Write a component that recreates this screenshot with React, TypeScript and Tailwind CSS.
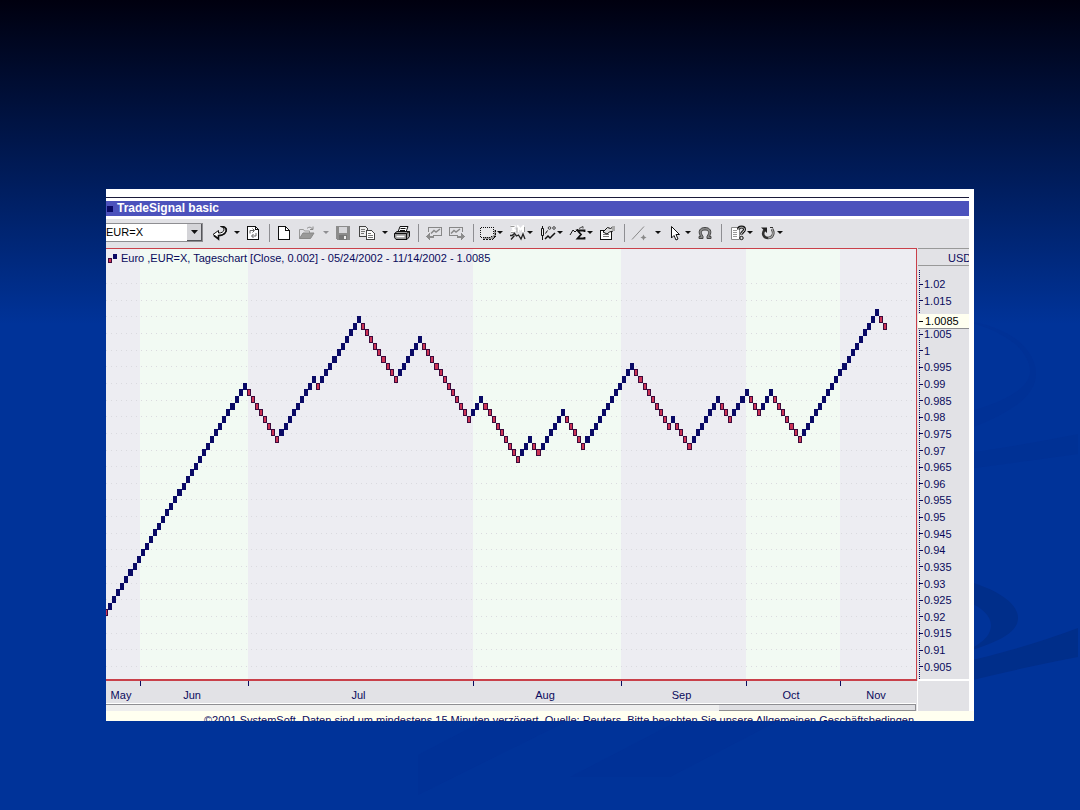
import React from 'react';

const CHART_WIDTH = 810;
const CHART_HEIGHT = 430;

// Signed run lengths of the renko bricks, oldest first
const RUNS = [34, -8, 9, -1, 10, -9, 6, -12, 3, -9, 3, -2, 6, -5, 12, -9, 1, -4, 7, -3, 4, -3, 3, -7, 19, -2];

const MONTHS = [
  { name: 'May', start: 0, end: 34, green: false },
  { name: 'Jun', start: 34, end: 142, green: true },
  { name: 'Jul', start: 142, end: 367, green: false },
  { name: 'Aug', start: 367, end: 515, green: true },
  { name: 'Sep', start: 515, end: 640, green: false },
  { name: 'Oct', start: 640, end: 734, green: true },
  { name: 'Nov', start: 734, end: 810, green: false },
];

const PRICES = [
  '1.02', '1.015', '1.01', '1.005', '1', '0.995', '0.99', '0.985', '0.98', '0.975', '0.97', '0.965',
  '0.96', '0.955', '0.95', '0.945', '0.94', '0.935', '0.93', '0.925', '0.92', '0.915', '0.91', '0.905',
];

type Brick = { x: number; y: number; width: number; up: boolean };

const brickX = (index: number) => Math.round(index * 4.08 - 2);

const buildBricks = (): Brick[] => {
  let index = 0;
  let level = 0;
  const bricks: Brick[] = [{ x: -2, y: 360, width: 4, up: false }];
  RUNS.forEach(run => {
    for (let i = 0; i < Math.abs(run); i++) {
      index += 1;
      level += Math.sign(run);
      bricks.push({
        x: brickX(index),
        y: Math.round(360.4 - level * 6.67),
        width: brickX(index + 1) - brickX(index),
        up: run > 0,
      });
    }
  });
  return bricks;
};

const BRICKS = buildBricks();

const Icon: React.FC<{ children: React.ReactNode; smooth?: boolean }> = ({ children, smooth }) => (
  <svg
    width="18"
    height="16"
    viewBox="0 0 18 16"
    fill="none"
    stroke="#111"
    shapeRendering={smooth ? 'auto' : 'crispEdges'}
    className="shrink-0"
    aria-hidden="true"
  >
    {children}
  </svg>
);

const BackIcon = () => (
  <Icon smooth>
    <path d="M9.500 1.500h2.500c3 0 4.500 2.500 3 5.500-1.500 2.500-4 3.500-7.500 3.500V14L2 9.500l5.500-4v2.500c3 0 5-1 5.500-3 .3-1.500-1-3-3.500-3.500z" fill="#fff" />
    <path d="M12 2c3.500.5 4 3.500 2 6s-4 2.500-6.500 2.500V14L3 10.500" strokeWidth="1.600" />
  </Icon>
);

const RefreshIcon = () => (
  <Icon>
    <path d="M3.500 1.500h8l3 3v10h-11z" fill="#fff" />
    <path d="M11.500 1.500v3h3" />
    <path d="M6 8.500V5.500h4M8.500 3.500l2 2-2 2M12 8v3H8M9.500 9l-2 2 2 2" stroke="#666" shapeRendering="auto" />
  </Icon>
);

const NewIcon = () => (
  <Icon>
    <path d="M3.500 1.500h7l4 4v9h-11z" fill="#fff" />
    <path d="M10.500 1.500v4h4" />
  </Icon>
);

const OpenIcon = () => (
  <Icon smooth>
    <path d="M1.500 13.500v-9h4l1 1.500h5v2" stroke="#999" />
    <path d="M1.500 13.500l3.500-5.500h11l-3.500 5.500z" fill="#999" stroke="#888" />
    <path d="M9 3.500c2-2 4-1.500 5.500.5M15 1.500v3h-3" stroke="#888" />
  </Icon>
);

const SaveIcon = () => (
  <Icon>
    <path d="M2 1h14v14H3l-1-1z" fill="#8c8c8c" stroke="none" />
    <path d="M5 2h8v6H5z" fill="#d6d6da" stroke="none" />
    <path d="M5 10h8v5H5z" fill="#777" stroke="none" />
    <path d="M10 11h2v3h-2z" fill="#eee" stroke="none" />
  </Icon>
);

const CopyIcon = () => (
  <Icon>
    <path d="M1.500 1.500h6l2 2v8h-8z" fill="#eee" stroke="#444" />
    <path d="M3 4.500h4M3 6.500h4M3 8.500h3" stroke="#777" />
    <path d="M8.500 5.500h5l3 3v6h-8z" fill="#fff" stroke="#444" />
    <path d="M10 8.500h3M10 10.500h5M10 12.500h5" stroke="#777" />
  </Icon>
);

const PrintIcon = () => (
  <Icon smooth>
    <path d="M5 7l2-5.500h8L13 7z" fill="#fff" />
    <path d="M7.500 3.500h5M7 5.500h5" />
    <path d="M1.500 8.500L4 6.500h12.500v5L14 14.500H3l-1.500-2z" fill="#999" />
    <path d="M1.500 8.500h12v5.500M13.500 8.500l3-2" />
    <path d="M3.500 11.500h8" stroke="#fff" strokeWidth="1.500" />
  </Icon>
);

const ChartBackIcon = () => (
  <Icon>
    <path d="M3.500 7V2.500h13v8H8" stroke="#888" />
    <path d="M6 8.500l3-3 2 1.500 4-3" stroke="#888" strokeWidth="1.500" shapeRendering="auto" />
    <path d="M1 11.500l4-4v3h4v2H5v3z" fill="#8c8c8c" stroke="none" />
  </Icon>
);

const ChartForwardIcon = () => (
  <Icon>
    <path d="M10 10.500H1.500v-8h13V7" stroke="#888" />
    <path d="M3 8.500l3-3 2 1.500 4-3" stroke="#888" strokeWidth="1.500" shapeRendering="auto" />
    <path d="M17 11.500l-4-4v3H9v2h4v3z" fill="#8c8c8c" stroke="none" />
  </Icon>
);

const FrameIcon = () => (
  <Icon>
    <path d="M14 5h3v7l-3 2H4v-3h10z" fill="#999" stroke="none" />
    <path d="M1.500 2.500h13v7l-3 2.500h-10z" fill="#e8e8ea" strokeDasharray="1 1" />
    <path d="M16.500 5v6l-3 3.500H4" strokeDasharray="2 1" />
  </Icon>
);

const PeriodIcon = () => (
  <Icon smooth>
    <path d="M2 1.500h3.500L4 4l2 1.500L2 7M9 7V1.500l2.500 3 2.500-3V7" stroke="#fff" strokeWidth="2" />
    <path d="M1.500 1.500h4M2 7.500h4M8 2.500v5M15.500 2v5" stroke="#999" />
    <path d="M1 10.500h2l2.500-2 2 2.500 2-1 2.500 4 2-5 2 5M2 14.500l3.500-4" stroke="#222" strokeWidth="1.300" />
  </Icon>
);

const CandleIcon = () => (
  <Icon smooth>
    <path d="M3.500 1v2M3.500 11v4" />
    <path d="M2.500 3.500h2v7h-2z" fill="#eee" />
    <path d="M6 14l3-3 2 2 5-5" strokeWidth="1.500" />
    <path d="M6.500 8.500l2-3" />
    <circle cx="10.500" cy="3" r="1.300" stroke="#444" />
    <circle cx="15" cy="3" r="1.300" stroke="#444" />
  </Icon>
);

const SigmaIcon = () => (
  <Icon smooth>
    <path d="M1 10l3-5 2 2 3-3" />
    <path d="M15.500 7V5.500H8.500l3.500 4-3.500 4h7V12" strokeWidth="1.800" />
    <path d="M10 3.500l4-2v2" stroke="#444" />
  </Icon>
);

const PropertiesIcon = () => (
  <Icon>
    <path d="M2.500 5.500h11v9h-11z" fill="#fff" />
    <path d="M5 9.500h6M5 11.500h6" stroke="#777" />
    <path d="M5 7l4.500-4.500 3 1L15 2v4l-3.500 1L9 9z" fill="#ddd" shapeRendering="auto" />
    <path d="M14 1h3v5h-3z" fill="#aaa" stroke="none" />
  </Icon>
);

const LineIcon = () => (
  <Icon smooth>
    <path d="M2 14.500L14 1.500" stroke="#888" />
    <path d="M13.500 9.500l1 2 2 1-2 1-1 2-1-2-2-1 2-1z" fill="#888" stroke="none" />
  </Icon>
);

const CursorIcon = () => (
  <Icon smooth>
    <path d="M5.500 1.500v11.500l2.500-2.500 2 4.500 2-1-2-4.500h3.500z" fill="#fff" />
  </Icon>
);

const MagnetIcon = () => (
  <Icon smooth>
    <path
      d="M3 13.500h4v-2C4 7 5.500 5 9 5s5 2 2 6.500v2h4v-2h-1.500C16.500 6 14 2.500 9 2.500S1.500 6 4.500 11.500H3z"
      fill="#8a8a8a"
      stroke="#444"
    />
  </Icon>
);

const HelpIcon = () => (
  <Icon smooth>
    <path d="M2.500 2.500h8v12h-8z" fill="#fff" stroke="#888" />
    <path d="M4 5.500h4M4 7.500h4M4 9.500h4M4 11.500h4" stroke="#999" />
    <path d="M9.500 4.500C9.500 1 15.500 1 15.500 4.500c0 2.500-3 2-3 5" stroke="#111" strokeWidth="3" />
    <path d="M9.500 4.500C9.500 1.500 15.500 1.500 15.500 4.500c0 2.500-3 2-3 4.500" stroke="#ddd" />
    <circle cx="12.500" cy="13" r="1.700" fill="#ddd" />
  </Icon>
);

const UndoIcon = () => (
  <Icon smooth>
    <path d="M13 4c3 5 0 9-4 9s-6.500-4-3.500-8" stroke="#333" strokeWidth="2.600" />
    <path d="M13 4c3 5 0 9-4 9" stroke="#aaa" strokeWidth="1.200" />
    <path d="M2 2.500h6V8z" fill="#222" stroke="none" />
    <path d="M11 2.500h3" stroke="#333" />
  </Icon>
);

type Tool =
  | { kind: 'icon'; label: string; width: string; icon: React.FC; end?: boolean }
  | { kind: 'menu'; label: string; width: string; muted?: boolean }
  | { kind: 'line'; width: string };

const TOOLS: Tool[] = [
  { kind: 'icon', label: 'Back', width: 'w-[22px]', icon: BackIcon },
  { kind: 'menu', label: 'Back history', width: 'w-[12px]' },
  { kind: 'icon', label: 'Refresh', width: 'w-[20px]', icon: RefreshIcon },
  { kind: 'line', width: 'w-[12px]' },
  { kind: 'icon', label: 'New', width: 'w-[18px]', icon: NewIcon },
  { kind: 'icon', label: 'Open', width: 'w-[28px]', icon: OpenIcon },
  { kind: 'menu', label: 'Open recent', width: 'w-[10px]', muted: true },
  { kind: 'icon', label: 'Save', width: 'w-[24px]', icon: SaveIcon },
  { kind: 'icon', label: 'Copy', width: 'w-[24px]', icon: CopyIcon },
  { kind: 'menu', label: 'Copy options', width: 'w-[12px]' },
  { kind: 'icon', label: 'Print', width: 'w-[22px]', icon: PrintIcon },
  { kind: 'line', width: 'w-[10px]' },
  { kind: 'icon', label: 'Previous chart', width: 'w-[22px]', icon: ChartBackIcon },
  { kind: 'icon', label: 'Next chart', width: 'w-[24px]', icon: ChartForwardIcon },
  { kind: 'line', width: 'w-[8px]' },
  { kind: 'icon', label: 'Frame', width: 'w-[20px]', icon: FrameIcon, end: true },
  { kind: 'menu', label: 'Frame options', width: 'w-[6px]' },
  { kind: 'icon', label: 'Period', width: 'w-[24px]', icon: PeriodIcon, end: true },
  { kind: 'menu', label: 'Period options', width: 'w-[6px]' },
  { kind: 'icon', label: 'Chart type', width: 'w-[24px]', icon: CandleIcon, end: true },
  { kind: 'menu', label: 'Chart type options', width: 'w-[6px]' },
  { kind: 'icon', label: 'Indicators', width: 'w-[24px]', icon: SigmaIcon, end: true },
  { kind: 'menu', label: 'Indicator options', width: 'w-[6px]' },
  { kind: 'icon', label: 'Properties', width: 'w-[28px]', icon: PropertiesIcon },
  { kind: 'line', width: 'w-[6px]' },
  { kind: 'icon', label: 'Draw line', width: 'w-[24px]', icon: LineIcon },
  { kind: 'menu', label: 'Drawing tools', width: 'w-[14px]' },
  { kind: 'icon', label: 'Pointer', width: 'w-[20px]', icon: CursorIcon },
  { kind: 'menu', label: 'Pointer options', width: 'w-[6px]' },
  { kind: 'icon', label: 'Magnet', width: 'w-[28px]', icon: MagnetIcon },
  { kind: 'line', width: 'w-[4px]' },
  { kind: 'icon', label: 'Help', width: 'w-[24px]', icon: HelpIcon, end: true },
  { kind: 'menu', label: 'Help topics', width: 'w-[6px]' },
  { kind: 'icon', label: 'Undo', width: 'w-[24px]', icon: UndoIcon, end: true },
  { kind: 'menu', label: 'Undo history', width: 'w-[6px]' },
];

const ToolItem: React.FC<{ tool: Tool }> = ({ tool }) => {
  if (tool.kind === 'line') {
    return (
      <div className={`${tool.width} flex shrink-0 justify-center`}>
        <span className="h-[18px] w-px bg-[#8e8e92]" />
      </div>
    );
  }
  if (tool.kind === 'menu') {
    return (
      <button type="button" aria-label={tool.label} className={`${tool.width} flex shrink-0 justify-center`}>
        <svg width="6" height="3" viewBox="0 0 6 3" className="shrink-0" aria-hidden="true">
          <path d="M0 0h6L3 3z" fill={tool.muted ? '#8e8e92' : '#111'} />
        </svg>
      </button>
    );
  }
  const ToolIcon = tool.icon;
  return (
    <button
      type="button"
      aria-label={tool.label}
      className={`${tool.width} flex shrink-0 ${tool.end ? 'justify-end' : 'justify-center'}`}
    >
      <ToolIcon />
    </button>
  );
};

const Toolbar = () => (
  <div className="flex h-[29px] items-center overflow-hidden bg-[#e2e2e6] pb-0.5">
    <div className="relative mr-1.5 h-[19px] w-[97px] shrink-0 border-y border-r border-[#8e8e92] bg-white">
      <select aria-label="Symbol" className="block h-4 w-full appearance-none bg-transparent text-[11px] leading-4 text-black">
        <option>EUR=X</option>
      </select>
      <span className="pointer-events-none absolute inset-y-0 right-0 flex w-[15px] items-center justify-center border-r border-b border-[#55555a] bg-[#d4d4d8]">
        <svg width="7" height="4" viewBox="0 0 7 4" aria-hidden="true">
          <path d="M0 0h7L3.500 4z" fill="#111" />
        </svg>
      </span>
    </div>
    {TOOLS.map((tool, i) => (
      <ToolItem key={i} tool={tool} />
    ))}
  </div>
);

const RenkoChart = () => (
  <svg
    viewBox={`0 0 ${CHART_WIDTH} ${CHART_HEIGHT}`}
    preserveAspectRatio="none"
    shapeRendering="crispEdges"
    className="block h-[430px] w-full"
    role="img"
    aria-label="Euro renko chart"
  >
    {MONTHS.map(month => (
      <rect
        key={month.name}
        x={month.start}
        width={month.end - month.start}
        height={CHART_HEIGHT}
        fill={month.green ? '#f2faf3' : '#ededf2'}
      />
    ))}
    {PRICES.map((price, i) => {
      const y = Math.round(34 + i * 16.65) + 0.5;
      return <line key={price} x1="0" x2={CHART_WIDTH} y1={y} y2={y} stroke="#dadadf" strokeDasharray="1 4" />;
    })}
    {BRICKS.map((brick, i) =>
      brick.up ? (
        <rect key={i} x={brick.x} y={brick.y} width={brick.width} height="7" fill="#0a0a66" />
      ) : (
        <g key={i}>
          <rect x={brick.x} y={brick.y} width={brick.width} height="7" fill="#3d0a3c" />
          <rect x={brick.x + 1} y={brick.y + 1} width={brick.width - 2} height="5" fill="#cc3355" />
        </g>
      )
    )}
  </svg>
);

const PriceAxis = () => (
  <div className="flex w-[52px] shrink-0 flex-col bg-[#e2e2e6] pl-px">
    <div className="h-[18px] overflow-hidden border-y border-[#999] pl-[30px] leading-[18px]">USD</div>
    <div className="relative flex flex-1 flex-col border-b-2 border-white pt-[10px] pb-1">
      <div className="absolute top-1 bottom-0 left-px border-l border-dotted border-[#0a0a5c]" />
      {PRICES.map(price => (
        <div key={price} className="flex flex-1 items-center">
          <span className="mr-px ml-px h-px w-1 bg-[#0a0a5c]" />
          <span className="leading-3">{price}</span>
        </div>
      ))}
      <div className="absolute top-[48px] right-0 left-0 flex h-[15px] items-center border-b border-[#8e8e92] bg-[#fffff0] text-black">
        <span className="mr-0.5 ml-px h-px w-1 bg-black" />
        1.0085
      </div>
    </div>
  </div>
);

const TimeAxis = () => (
  <div className="flex bg-[#e2e2e6]">
    <div className="min-w-0 flex-1 pr-px">
      <div className="grid h-[23px] grid-cols-[34fr_108fr_225fr_148fr_125fr_94fr_76fr] border-b border-white">
        {MONTHS.map((month, i) => (
          <div key={month.name} className="relative pt-1.5 pr-1 text-center leading-4">
            {i > 0 && <span className="absolute top-0 left-0 h-[5px] w-px bg-[#0a0a5c]" />}
            {month.name}
          </div>
        ))}
      </div>
      <div className="flex h-[7px] border-t border-[#8e8e92] bg-[#eeeeee]">
        <div className="ml-auto w-[197px] border-r border-b border-[#8e8e92] bg-[#dedee2]" />
      </div>
    </div>
    <div className="w-[52px] shrink-0 border-l border-white" />
  </div>
);

const Backdrop = () => (
  <svg
    viewBox="0 0 1080 810"
    preserveAspectRatio="none"
    className="absolute inset-0 h-full w-full"
    aria-hidden="true"
  >
    <path d="M960 320C1010 325 1036 350 1036 374C1036 400 1000 418 960 432V414C1000 404 1029 390 1030 372C1030 350 1005 330 960 320z" fill="#003196" />
    <path d="M960 454Q1020 446 1078 434V454Q1020 462 960 470z" fill="#003195" />
    <path d="M960 579C995 588 1018 602 1018 618C1018 634 995 643 960 654C980 645 991 637 991 625C991 614 978 605 960 598z" fill="#002e8a" />
    <path d="M960 663Q1025 648 1078 628V657Q1025 667 960 683z" fill="#002e8a" />
    <path d="M418 755L485 720H570L418 795z" fill="#003197" />
    <path d="M570 777L680 720H780L670 777z" fill="#003197" />
  </svg>
);

const App: React.FC = () => {
  return (
    <div className="relative min-h-screen bg-[linear-gradient(to_bottom,#00000f,#003399_40%)] px-[106px] pt-[189px] pb-[89px] font-['Liberation_Sans',Arial,sans-serif] text-[12px] text-[#0a0a5c]">
      <Backdrop />
      <main className="relative bg-white pt-2 pr-[5px]">
        <header className="border-t border-[#1a1a3a] pt-[3px]">
          <div className="flex h-[15px] items-center bg-[#4c52bc] pl-px">
            <span className="mr-1 h-1.5 w-1.5 bg-[#0a0a66]" />
            <h1 className="text-[12px] leading-[15px] font-bold text-white">TradeSignal basic</h1>
          </div>
        </header>
        <div className="h-[3px]" />
        <Toolbar />

        <div className="flex text-[11px]">
          <section className="relative min-w-0 flex-1 border-t border-r border-b-2 border-[#c9404a]">
            <RenkoChart />
            <div className="absolute top-0.5 left-0.5 flex items-center">
              <svg width="9" height="9" viewBox="0 0 9 9" shapeRendering="crispEdges" aria-hidden="true">
                <path d="M0 4h4v5H0z" fill="#3d0a3c" />
                <path d="M1 5h2v3H1z" fill="#cc3355" />
                <path d="M5 0h4v5H5z" fill="#0a0a66" />
              </svg>
              <h2 className="ml-1 leading-[14px] whitespace-nowrap">
                Euro ,EUR=X, Tageschart [Close, 0.002] - 05/24/2002 - 11/14/2002 - 1.0085
              </h2>
            </div>
          </section>
          <PriceAxis />
        </div>
        <div className="text-[11px]">
          <TimeAxis />
        </div>
        <footer className="-mr-[5px] h-[10px] overflow-hidden bg-[#fffff0] pt-[3px] pl-[98px] text-[11px] leading-[12px] whitespace-nowrap">
          ©2001 SystemSoft. Daten sind um mindestens 15 Minuten verzögert. Quelle: Reuters. Bitte beachten Sie unsere
          Allgemeinen Geschäftsbedingen
        </footer>
      </main>
    </div>
  );
};

export default App;
